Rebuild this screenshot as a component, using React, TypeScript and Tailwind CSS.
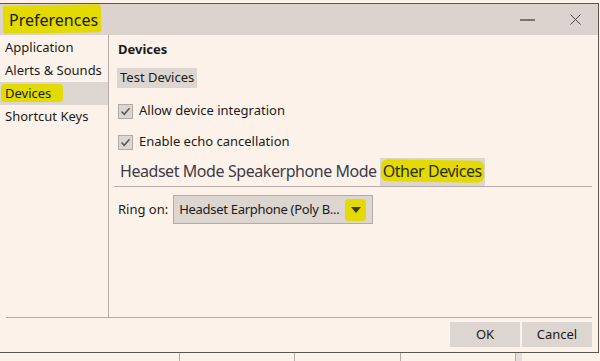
import React from 'react';

// 環境設定ダイアログの再現
const sidebarItems = ['Application', 'Alerts & Sounds', 'Devices', 'Shortcut Keys'];

function Check() {
  return (
    <span className="w-[15px] h-[15px] border border-[#b3aaa5] bg-[#ddd5d0] flex items-center justify-center">
      <svg width="11" height="11" viewBox="0 0 11 11">
        <path d="M1.5 5.5 L4.2 8.3 L9.5 2.2" fill="none" stroke="#5a5552" strokeWidth="1.5" />
      </svg>
    </span>
  );
}

export default function App() {
  return (
    <div
      className="w-[600px] h-[361px] bg-[#fdf2e9] overflow-hidden text-[#1b1b1b]"
      style={{ fontFamily: '"Segoe UI", "Noto Sans", sans-serif' }}
    >
      <div className="h-[3px]" />
      {/* ダイアログ本体 */}
      <div className="w-[599px] h-[350px] border-t border-r border-b border-[#5a5552] flex flex-col">
        {/* タイトルバー */}
        <div className="h-[31px] bg-[#ddd3ce] flex items-center relative">
          <span className="absolute left-[3px] top-[1px] w-[98px] h-[28px] bg-[#e2da00] rounded-[3px] -rotate-1" />
          <span className="relative ml-[9px] text-[16px]">Preferences</span>
          <div className="ml-auto flex items-center">
            <span className="w-[15px] h-[2px] bg-[#7a726f] mr-[35px]" />
            <svg width="11" height="11" viewBox="0 0 11 11" className="mr-[17px]">
              <path d="M0.5 0.5 L10.5 10.5 M10.5 0.5 L0.5 10.5" stroke="#4d4845" strokeWidth="1" />
            </svg>
          </div>
        </div>

        {/* メイン */}
        <div className="flex h-[282px]">
          <div className="w-[109px] border-r border-[#b5aaa5] pt-[1px] text-[13px]">
            {sidebarItems.map((item) => (
              <div
                key={item}
                className={`h-[23px] flex items-center pl-[5px] relative ${item === 'Devices' ? 'bg-[#ddd5d0]' : ''}`}
              >
                {item === 'Devices' && (
                  <span className="absolute left-[1px] top-[2px] w-[62px] h-[18px] bg-[#e2da00] rounded-[4px]" />
                )}
                <span className="relative">{item}</span>
              </div>
            ))}
          </div>

          <div className="flex-1 pl-[5px] pr-[6px] text-[13px]">
            <div className="pl-[4px] pt-[2px] font-bold h-[28px] flex items-center">Devices</div>
            <div className="mt-[5px] ml-[3px] inline-flex h-[20px] items-center px-[3px] bg-[#ddd5d0]">Test Devices</div>
            <div className="flex items-center gap-[6px] ml-[4px] mt-[15px] h-[16px]">
              <Check />
              <span>Allow device integration</span>
            </div>
            <div className="flex items-center gap-[6px] ml-[4px] mt-[15px] h-[16px]">
              <Check />
              <span>Enable echo cancellation</span>
            </div>

            {/* タブ */}
            <div className="mt-[8px] h-[29px] border-b border-[#b5aaa5] flex items-end text-[16px] tracking-[-0.45px] text-[#3c3b47] whitespace-nowrap">
              <span className="pl-[6px] pb-[3px]">Headset Mode</span>
              <span className="pl-[4px] pb-[3px]">Speakerphone Mode</span>
              <span className="ml-[3px] h-[28px] px-[3px] bg-[#ddd5d0] flex items-end pb-[3px] relative text-[#2e2d1f]">
                <span className="absolute left-[1px] right-[1px] top-[2px] h-[22px] bg-[#e2da00] rounded-[6px] rotate-1" />
                <span className="relative">Other Devices</span>
              </span>
            </div>

            <div className="flex items-center mt-[8px] ml-[4px]">
              <span>Ring on:</span>
              <div className="ml-[5px] w-[200px] h-[29px] bg-[#ddd5d0] border border-[#b5aaa5] flex items-center pl-[5px] pr-[6px]">
                <span className="whitespace-nowrap tracking-[-0.3px]">Headset Earphone (Poly B...</span>
                <span className="ml-auto relative w-[21px] h-[22px] flex items-center justify-center shrink-0">
                  <span className="absolute inset-0 bg-[#e2da00] rounded-[4px]" />
                  <svg width="10" height="6" viewBox="0 0 10 6" className="relative">
                    <path d="M0 0 H10 L5 6 Z" fill="#3d3b20" />
                  </svg>
                </span>
              </div>
            </div>
          </div>
        </div>

        {/* フッター */}
        <div className="ml-[6px] mr-[6px] border-t border-[#b5aaa5] flex-1 flex justify-end items-start pt-[4px] text-[13px]">
          <button className="w-[70px] h-[25px] bg-[#ddd5d0]">OK</button>
          <button className="ml-[2px] w-[70px] h-[25px] bg-[#ddd5d0]">Cancel</button>
        </div>
      </div>

      {/* 背面のウィンドウ */}
      <div className="flex h-[8px]">
        <div className="w-[180px] border-r border-[#b5aaa5]" />
        <div className="w-[115px] border-r border-[#b5aaa5]" />
        <div className="w-[106px] border-r border-[#b5aaa5]" />
        <div className="w-[115px] border-r border-[#b5aaa5]" />
        <div className="w-[6px] bg-[#e6ddd8]" />
      </div>
    </div>
  );
}
